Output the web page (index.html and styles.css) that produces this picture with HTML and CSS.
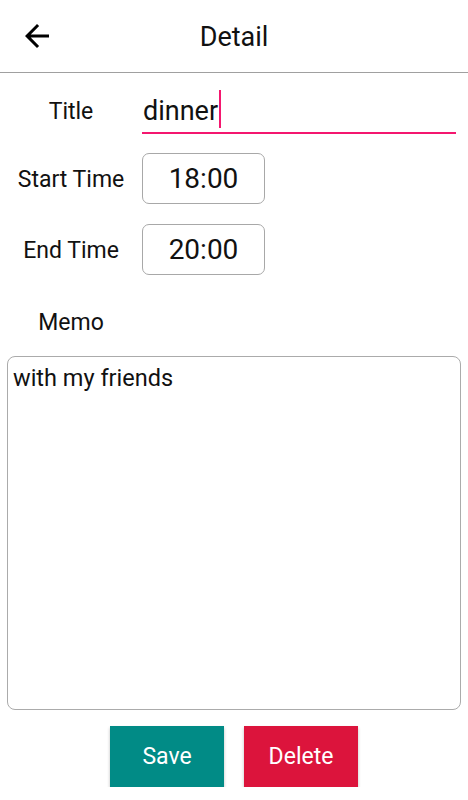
FILE: index.html
```html
<!DOCTYPE html>
<html lang="en">
<head>
    <meta charset="UTF-8">
    <meta name="viewport" content="width=device-width, initial-scale=1.0">
    <title>Detail</title>
    <link rel="stylesheet" href="styles.css">
</head>
<body>
    <header class="app-bar">
        <button class="back-btn" aria-label="Back">
            <svg width="36" height="36" viewBox="0 0 24 24"><path d="M20 11H7.83l5.59-5.59L12 4l-8 8 8 8 1.41-1.41L7.83 13H20v-2z" fill="#000"/></svg>
        </button>
        <h1 class="app-title">Detail</h1>
        <span></span>
    </header>

    <main class="form">
        <div class="row title-row">
            <label class="label">Title</label>
            <div class="title-input"><span class="title-text">dinner</span><span class="caret"></span></div>
        </div>

        <div class="row">
            <label class="label">Start Time</label>
            <div class="time-box">18:00</div>
        </div>

        <div class="row">
            <label class="label">End Time</label>
            <div class="time-box">20:00</div>
        </div>

        <div class="row memo-row">
            <label class="label">Memo</label>
        </div>

        <div class="memo">with my friends</div>

        <div class="buttons">
            <button class="btn save">Save</button>
            <button class="btn delete">Delete</button>
        </div>
    </main>
</body>
</html>
```

FILE: styles.css
```css
body {
    margin: 0;
    font-family: Roboto, "Noto Sans", sans-serif;
    color: #111;
    background: #fff;
}

.app-bar {
    display: grid;
    grid-template-columns: 1fr auto 1fr;
    align-items: center;
    height: 72px;
    border-bottom: 1px solid #a0a0a0;
}
.back-btn {
    justify-self: start;
    margin-left: 19px;
    padding: 0;
    border: none;
    background: none;
    display: flex;
}
.app-title {
    margin: 2px 0 0;
    font-size: 27px;
    font-weight: 400;
    color: #111;
}

.form {
    display: flex;
    flex-direction: column;
}
.row {
    display: grid;
    grid-template-columns: 142px auto;
    align-items: center;
    justify-content: start;
}
.label {
    text-align: center;
    font-size: 23px;
    padding-top: 2px;
}

.title-row {
    grid-template-columns: 142px 1fr;
    margin: 13px 12px 0 0;
}
.title-input {
    height: 46px;
    display: flex;
    align-items: center;
    font-size: 27px;
    border-bottom: 2px solid #f4176f;
    padding-left: 1px;
}
.title-text {
    padding-top: 4px;
}
.caret {
    display: inline-block;
    width: 2px;
    height: 38px;
    background: #f4176f;
    margin-left: 1px;
}

.time-box {
    width: 121px;
    height: 49px;
    border: 1px solid #a8a8a8;
    border-radius: 7px;
    display: flex;
    align-items: center;
    justify-content: center;
    font-size: 28px;
}
.row + .row {
    margin-top: 20px;
}
.title-row + .row {
    margin-top: 19px;
}

.memo-row {
    margin-top: 32px !important;
}

.memo {
    margin: 20px 7px 0;
    height: 344px;
    border: 1px solid #ababab;
    border-radius: 8px;
    padding: 7px 5px 1px;
    font-size: 23.5px;
}

.buttons {
    display: flex;
    justify-content: center;
    gap: 20px;
    margin-top: 16px;
}
.btn {
    width: 114px;
    height: 61px;
    border: none;
    color: #fff;
    font-family: inherit;
    font-size: 23px;
    box-shadow: 0 2px 3px rgba(0, 0, 0, 0.25);
}
.save {
    background-color: #018b86;
}
.delete {
    background-color: #dc143c;
}
```
